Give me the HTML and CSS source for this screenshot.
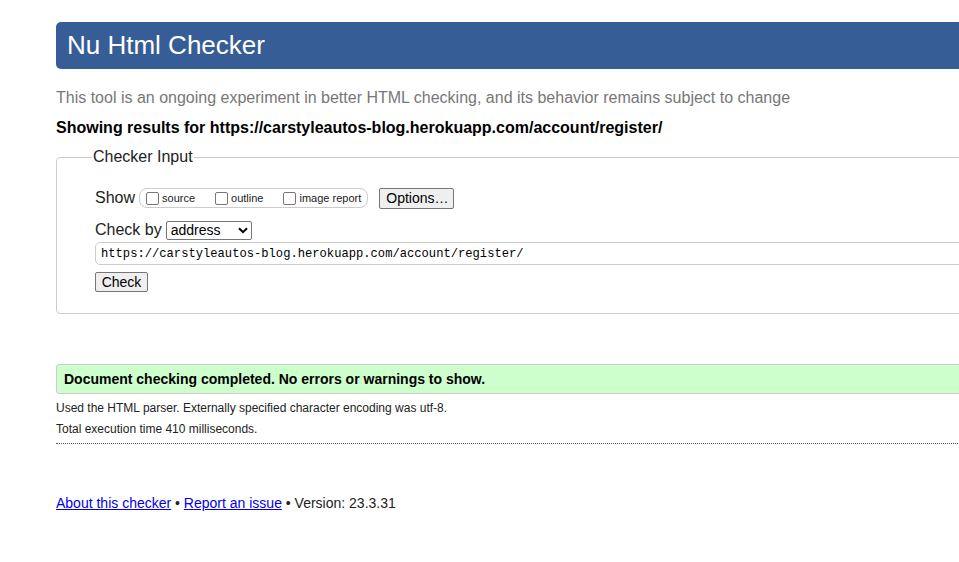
FILE: index.html
```html
<!DOCTYPE html>
<html lang="en">
<head>
<meta charset="utf-8">
<title>Showing results for https://carstyleautos-blog.herokuapp.com/account/register/ - Nu Html Checker</title>
<link rel="stylesheet" href="styles.css">
</head>
<body>
<div class="page">
  <h1 class="title">Nu Html Checker</h1>
  <p class="subtitle">This tool is an ongoing experiment in better HTML checking, and its behavior remains subject to change</p>
  <p class="showing">Showing results for https://carstyleautos-blog.herokuapp.com/account/register/</p>
  <fieldset class="input-box">
    <legend class="legend">Checker Input</legend>
    <div class="row show-row">
      <span class="row-label">Show</span>
      <span class="opts">
        <label class="opt"><span class="cb"></span>source</label>
        <label class="opt"><span class="cb"></span>outline</label>
        <label class="opt"><span class="cb"></span>image report</label>
      </span>
      <button class="btn options-btn" type="button">Options…</button>
    </div>
    <div class="row by-row">
      <span class="row-label">Check by</span>
      <span class="select">address<svg class="chev" width="10" height="7" viewBox="0 0 10 7"><path d="M1 1.2 L5 5.2 L9 1.2" fill="none" stroke="#000" stroke-width="2"/></svg></span>
    </div>
    <div class="url">https://carstyleautos-blog.herokuapp.com/account/register/</div>
    <button class="btn check-btn" type="button">Check</button>
  </fieldset>
  <div class="result">Document checking completed. No errors or warnings to show.</div>
  <p class="details">Used the HTML parser. Externally specified character encoding was utf-8.</p>
  <p class="details">Total execution time 410 milliseconds.</p>
  <hr class="sep">
  <p class="footer"><a href="#">About this checker</a> • <a href="#">Report an issue</a> • Version: 23.3.31</p>
</div>
</body>
</html>
```
FILE: styles.css
```css
html, body {
  margin: 0;
  padding: 0;
  overflow: hidden;
  background: #fff;
}
body {
  font-family: "Liberation Sans", Arial, sans-serif;
  color: #222;
}
.page {
  width: 1100px;
  margin-left: 56px;
  padding-top: 22px;
}
.title {
  margin: 0;
  height: 47px;
  line-height: 47px;
  padding-left: 11px;
  background: #365d95;
  color: #fff;
  font-size: 26px;
  font-weight: normal;
  border-radius: 5px 0 0 5px;
}
.subtitle {
  margin: 20px 0 0;
  font-size: 16px;
  line-height: 18px;
  color: #777;
}
.showing {
  margin: 12px 0 0;
  font-size: 16px;
  line-height: 18px;
  font-weight: bold;
  color: #000;
}
.input-box {
  margin: 11px 0 0;
  padding: 11px 37px 21px 38px;
  border: 1px solid #ccc;
  border-radius: 4px;
}
.legend {
  font-size: 16px;
  line-height: 18px;
  padding: 0 1px;
  margin-left: -3px;
  color: #222;
}
.row {
  display: flex;
  align-items: center;
}
.row-label {
  font-size: 16px;
  color: #222;
}
.show-row {
  height: 22px;
  margin-top: 10px;
}
.opts {
  display: flex;
  align-items: center;
  height: 18px;
  margin-left: 4px;
  padding: 0 6px;
  border: 1px solid #ccc;
  border-radius: 8px;
  gap: 20px;
}
.opt {
  display: flex;
  align-items: center;
  font-size: 11px;
  color: #222;
}
.cb {
  width: 11px;
  height: 11px;
  border: 1px solid #767676;
  border-radius: 2px;
  margin-right: 3px;
  background: #fff;
}
.btn {
  font-family: "Liberation Sans", Arial, sans-serif;
  font-size: 14px;
  color: #000;
  background: #efefef;
  border: 1px solid #767676;
  border-radius: 2px;
  padding: 0 6px;
  height: 21px;
  line-height: 19px;
}
.options-btn {
  margin-left: 11px;
  width: 75px;
}
.by-row {
  margin-top: 11px;
  height: 20px;
}
.select {
  display: flex;
  align-items: center;
  justify-content: space-between;
  margin-left: 4px;
  width: 77px;
  height: 17px;
  padding: 0 3px 0 4px;
  border: 1px solid #767676;
  border-radius: 2px;
  font-size: 14px;
  color: #000;
}
.url {
  margin-top: 2px;
  height: 21px;
  line-height: 21px;
  padding: 1px 0 0 5px;
  box-sizing: border-box;
  height: 23px;
  border: 1px solid #ccc;
  border-radius: 5px 0 0 5px;
  font-family: "Liberation Mono", "DejaVu Sans Mono", monospace;
  font-size: 12.15px;
  color: #000;
}
.check-btn {
  margin-top: 7px;
  width: 53px;
  height: 20px;
  line-height: 18px;
  padding: 0;
}
.result {
  margin-top: 50px;
  height: 28px;
  line-height: 28px;
  padding-left: 7px;
  background: #ccffcc;
  border: 1px solid #ccc;
  border-radius: 3px 0 0 3px;
  font-size: 14px;
  font-weight: bold;
  color: #000;
}
.details {
  margin: 7px 0 0;
  font-size: 12px;
  line-height: 14px;
  color: #222;
}
.details + .details {
  margin-top: 7px;
}
.sep {
  margin: 7px 0 0;
  border: 0;
  border-top: 1px dotted #555;
  height: 0;
}
.footer {
  margin: 51px 0 0;
  font-size: 14px;
  line-height: 16px;
  color: #222;
}
.footer a {
  color: #0000ee;
}
```
